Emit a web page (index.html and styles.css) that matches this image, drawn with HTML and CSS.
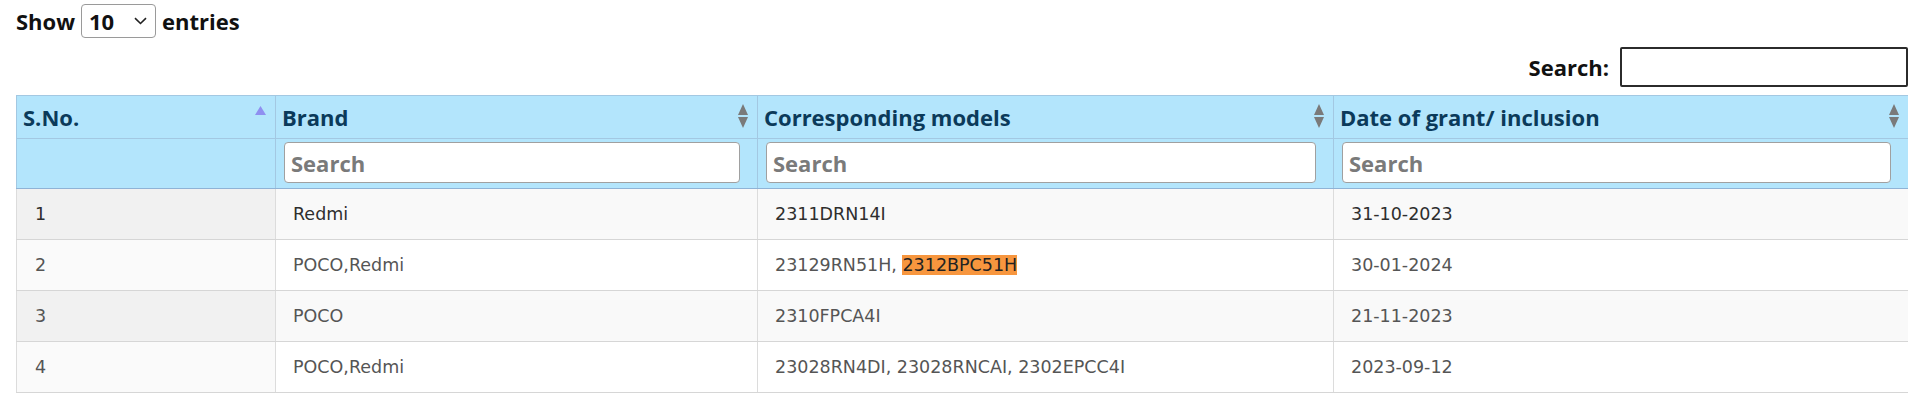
FILE: index.html
```html
<!DOCTYPE html>
<html>
<head>
<meta charset="utf-8">
<link rel="stylesheet" href="styles.css">
</head>
<body>
<div class="page">
  <div class="length">
    <span>Show</span>
    <span class="select"><span class="select-val">10</span><svg class="chev" width="13" height="8" viewBox="0 0 13 8"><path d="M1 1.2 L6.5 6.5 L12 1.2" fill="none" stroke="#222" stroke-width="1.6"/></svg></span>
    <span>entries</span>
  </div>
  <div class="filter">
    <label class="filter-label">Search:</label>
    <span class="filter-input"></span>
  </div>
  <table class="grid">
    <colgroup>
      <col class="c1"><col class="c2"><col class="c3"><col class="c4">
    </colgroup>
    <thead>
      <tr class="head">
        <th><div class="th-in"><span>S.No.</span><svg class="asc" width="11" height="9" viewBox="0 0 11 9"><polygon points="5.5,0 11,9 0,9" fill="#8f8ff0"/></svg></div></th>
        <th><div class="th-in"><span>Brand</span><svg class="both" width="10" height="24" viewBox="0 0 10 24"><polygon points="5,0 10,11 0,11" fill="#7a7a7a"/><polygon points="0,13 10,13 5,24" fill="#7a7a7a"/></svg></div></th>
        <th><div class="th-in"><span>Corresponding models</span><svg class="both" width="10" height="24" viewBox="0 0 10 24"><polygon points="5,0 10,11 0,11" fill="#7a7a7a"/><polygon points="0,13 10,13 5,24" fill="#7a7a7a"/></svg></div></th>
        <th><div class="th-in"><span>Date of grant/ inclusion</span><svg class="both" width="10" height="24" viewBox="0 0 10 24"><polygon points="5,0 10,11 0,11" fill="#7a7a7a"/><polygon points="0,13 10,13 5,24" fill="#7a7a7a"/></svg></div></th>
      </tr>
      <tr class="search-row">
        <th></th>
        <th><div class="col-search">Search</div></th>
        <th><div class="col-search">Search</div></th>
        <th><div class="col-search">Search</div></th>
      </tr>
    </thead>
    <tbody>
      <tr class="odd dark">
        <td class="sorted">1</td>
        <td>Redmi</td>
        <td>2311DRN14I</td>
        <td>31-10-2023</td>
      </tr>
      <tr class="even">
        <td class="sorted">2</td>
        <td>POCO,Redmi</td>
        <td>23129RN51H, <span class="hl">2312BPC51H</span></td>
        <td>30-01-2024</td>
      </tr>
      <tr class="odd">
        <td class="sorted">3</td>
        <td>POCO</td>
        <td>2310FPCA4I</td>
        <td>21-11-2023</td>
      </tr>
      <tr class="even">
        <td class="sorted">4</td>
        <td>POCO,Redmi</td>
        <td>23028RN4DI, 23028RNCAI, 2302EPCC4I</td>
        <td>2023-09-12</td>
      </tr>
    </tbody>
  </table>
</div>
</body>
</html>
```

FILE: styles.css
```css
html, body {
  margin: 0;
  padding: 0;
  background: #ffffff;
}

.page {
  width: 1892px;
  padding: 4px 0 0 16px;
  font-family: "Open Sans", "Liberation Sans", sans-serif;
  color: #111;
}

.length {
  display: flex;
  align-items: center;
  gap: 6px;
  height: 34px;
  font-size: 22px;
  font-weight: 700;
}

.select {
  display: inline-flex;
  align-items: center;
  justify-content: space-between;
  box-sizing: border-box;
  width: 75px;
  height: 34px;
  padding: 0 8px 0 7px;
  border: 1px solid #9a9a9a;
  border-radius: 4px;
  background: #fff;
}

.filter {
  display: flex;
  justify-content: flex-end;
  align-items: center;
  gap: 11px;
  margin-top: 9px;
  height: 40px;
  font-size: 22px;
  font-weight: 700;
}

.filter-input {
  box-sizing: border-box;
  width: 288px;
  height: 40px;
  border: 2px solid #2b2b2b;
  border-radius: 2px;
  background: #fff;
}

.grid {
  margin-top: 8px;
  width: 1892px;
  table-layout: fixed;
  border-collapse: collapse;
}

.c1 { width: 259px; }
.c2 { width: 482px; }
.c3 { width: 576px; }
.c4 { width: 575px; }

.head th {
  height: 42px;
  padding: 0 9px 0 6px;
  background: #b3e5fc;
  border: 1px solid #a3c8e2;
  color: #0b3a5a;
  font-size: 22px;
  font-weight: 700;
  text-align: left;
}

.th-in {
  display: flex;
  justify-content: space-between;
  align-items: center;
}

.th-in svg {
  flex: none;
  margin-top: -2px;
}

.th-in svg.asc {
  margin-top: 0;
  margin-bottom: 14px;
}

.search-row th {
  height: 48px;
  padding: 3px 17px 5px 8px;
  box-sizing: border-box;
  background: #b3e5fc;
  border: 1px solid #a3c8e2;
  border-bottom: 1px solid #8fb3d6;
  vertical-align: top;
}

.col-search {
  box-sizing: border-box;
  height: 41px;
  padding: 0 6px;
  display: flex;
  align-items: center;
  background: #fff;
  border: 1px solid #a0a0a0;
  border-radius: 4px;
  color: #7a7a7a;
  font-size: 22px;
  font-weight: 700;
}

.grid td {
  height: 50px;
  padding: 0 0 0 17px;
  border-left: 1px solid #dcdcdc;
  border-right: 1px solid #dcdcdc;
  border-bottom: 1px solid #d6d6d6;
  font-family: "DejaVu Sans", Verdana, sans-serif;
  font-size: 17.5px;
  color: #555;
  vertical-align: middle;
}

.grid td:first-child {
  padding-left: 18px;
}

tr.odd td { background: #f9f9f9; }
tr.even td { background: #ffffff; }
tr.odd td.sorted { background: #f1f1f1; }
tr.even td.sorted { background: #fafafa; }

tr.dark td { color: #2e2e2e; }

.hl {
  background: #f7963e;
  color: #222;
}
```
